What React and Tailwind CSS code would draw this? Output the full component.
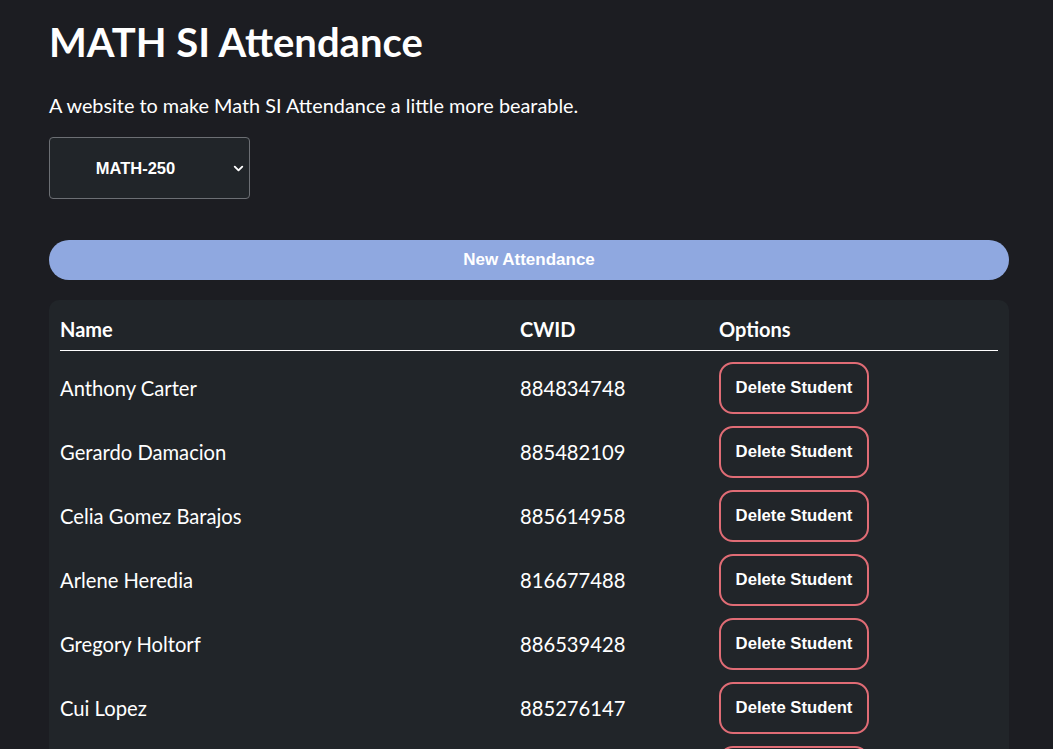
// App.jsx – Math SI attendance page

import React from "react";
import { ChevronDown } from "lucide-react";

const students = [
  { name: "Anthony Carter", cwid: "884834748" },
  { name: "Gerardo Damacion", cwid: "885482109" },
  { name: "Celia Gomez Barajos", cwid: "885614958" },
  { name: "Arlene Heredia", cwid: "816677488" },
  { name: "Gregory Holtorf", cwid: "886539428" },
  { name: "Cui Lopez", cwid: "885276147" },
  { name: "Vanessa Martinez", cwid: "885103962" },
];

const App = () => (
  <div className="min-h-screen bg-[#1c1d22] text-white font-['Lato',sans-serif] px-[49px] pt-[18px] pb-10 box-border">
    <div className="w-[960px]">
      {/* heading */}
      <h1 className="text-[40px] font-bold leading-[48px] m-0">MATH SI Attendance</h1>
      <p className="text-[19.85px] leading-[24px] mt-[27px]">
        A website to make Math SI Attendance a little more bearable.
      </p>

      {/* course select */}
      <div className="mt-[20px] w-[201px] h-[62px] border border-[#6c6f74] rounded-[4px] bg-[#212529] flex items-center relative">
        <span className="flex-1 text-center pr-[28px] font-['Liberation_Sans',sans-serif] font-bold text-[16.5px]">
          MATH-250
        </span>
        <ChevronDown className="absolute right-[3px] top-[23px] w-[15px] h-[15px]" strokeWidth={3} />
      </div>

      {/* new attendance */}
      <button className="mt-[41px] w-full h-[40px] rounded-full bg-[#8fa8e0] text-white font-['Liberation_Sans',sans-serif] font-bold text-[17px]">
        New Attendance
      </button>

      {/* table card */}
      <div className="mt-[20px] bg-[#212529] rounded-[10px] px-[11px] pt-[16px] pb-4">
        <div className="grid grid-cols-[460px_199px_1fr] border-b border-white h-[35px] items-start font-bold text-[20px] leading-[26px]">
          <div>Name</div>
          <div>CWID</div>
          <div>Options</div>
        </div>
        <div className="pt-[5px]">
          {students.map((s) => (
            <div key={s.cwid} className="grid grid-cols-[460px_199px_1fr] h-[64px] items-center text-[20.2px]">
              <div>{s.name}</div>
              <div>{s.cwid}</div>
              <div>
                <button className="w-[150px] h-[52px] border-2 border-[#e06c75] rounded-[14px] font-['Liberation_Sans',sans-serif] font-bold text-[16.7px] text-white">
                  Delete Student
                </button>
              </div>
            </div>
          ))}
        </div>
      </div>
    </div>
  </div>
);

export default App;
